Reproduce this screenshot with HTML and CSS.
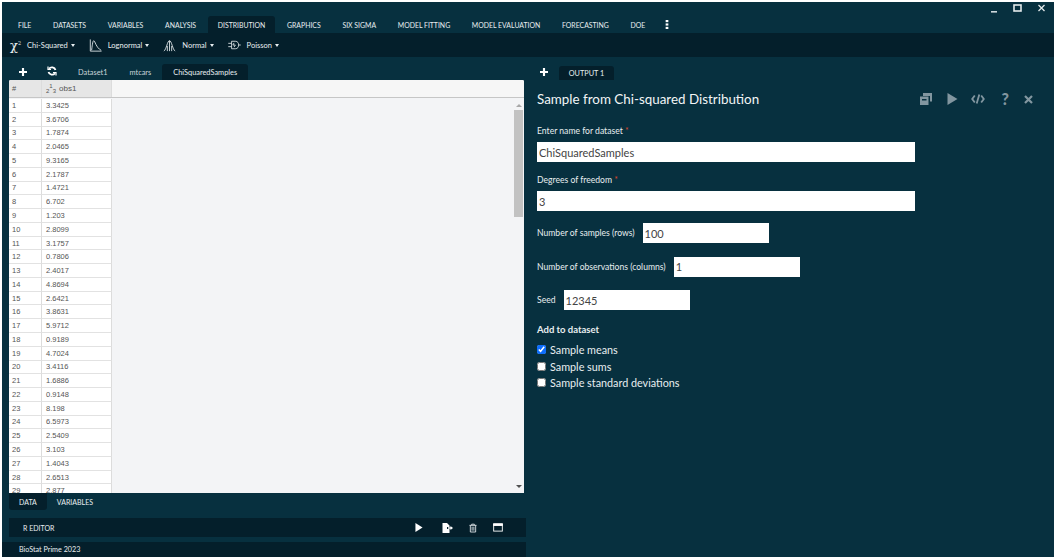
FILE: index.html
```html
<!DOCTYPE html>
<html lang="en">

<head>
    <meta charset="UTF-8">
    <title>BioStat Prime 2023</title>
    <link rel="stylesheet" href="styles.css">
</head>

<body>
    <div class="app">
        <div class="menu-bar">
            <div class="menu-item">FILE</div>
            <div class="menu-item">DATASETS</div>
            <div class="menu-item">VARIABLES</div>
            <div class="menu-item">ANALYSIS</div>
            <div class="menu-item active">DISTRIBUTION</div>
            <div class="menu-item">GRAPHICS</div>
            <div class="menu-item">SIX SIGMA</div>
            <div class="menu-item">MODEL FITTING</div>
            <div class="menu-item">MODEL EVALUATION</div>
            <div class="menu-item">FORECASTING</div>
            <div class="menu-item">DOE</div>
            <div class="menu-more">
                <svg width="4" height="9" viewBox="0 0 4 10" fill="#fff"><rect x="0.5" y="0" width="3" height="2.4"/><rect x="0.5" y="3.8" width="3" height="2.4"/><rect x="0.5" y="7.6" width="3" height="2.4"/></svg>
            </div>
            <div class="window-buttons">
                <svg width="9" height="9" viewBox="0 0 9 9" fill="#cfd8dc"><rect x="1" y="7" width="6" height="1.6"/></svg>
                <svg width="10" height="9" viewBox="0 0 10 9" fill="none" stroke="#e4eaec" stroke-width="1.6"><rect x="1" y="1" width="7" height="6"/></svg>
                <svg width="9" height="9" viewBox="0 0 9 9" stroke="#e4eaec" stroke-width="1.3"><path d="M1.5 1l6 6M7.5 1l-6 6"/></svg>
            </div>
        </div>

        <div class="tool-bar">
            <div class="tool">
                <span class="tool-chi">&chi;<sup>2</sup></span>
                <span>Chi-Squared</span><span class="caret"></span>
            </div>
            <div class="tool">
                <svg width="13" height="13" viewBox="0 0 15 15" fill="none" stroke="#e4eaec" stroke-width="1"><path d="M1.5 0.5v13.5h13"/><path d="M3 13C4 5 4.5 2 5.5 2c1.5 0 2.5 8 8.5 11"/></svg>
                <span>Lognormal</span><span class="caret"></span>
            </div>
            <div class="tool">
                <svg width="13" height="13" viewBox="0 0 15 15" fill="none" stroke="#e4eaec" stroke-width="1"><path d="M1 14C4 12 5 2 7.5 2S11 12 14 14"/><path d="M7.5 2v12M5 8v6M10 8v6"/></svg>
                <span>Normal</span><span class="caret"></span>
            </div>
            <div class="tool">
                <svg width="13" height="10" viewBox="0 0 15 12" fill="none" stroke="#e4eaec" stroke-width="1"><path d="M0 4h4M0 8h4M4 1.5h4.500c3 0 4 2.500 4 4.500s-1 4.500-4 4.500H4zM12.500 6H15"/><path d="M7 3.500l-1.500 2.500h3L7 8.500"/></svg>
                <span>Poisson</span><span class="caret"></span>
            </div>
        </div>

        <div class="main">
            <div class="left-pane">
                <div class="tab-row">
                    <svg class="tab-icon" width="8" height="8" viewBox="0 0 9 9" fill="#fff"><path d="M3.300 0h2.400v3.300H9v2.400H5.700V9H3.300V5.700H0V3.300h3.300z"/></svg>
                    <svg class="tab-icon refresh" width="10" height="10" viewBox="0 0 10 10" fill="none" stroke="#fff" stroke-width="1.800"><path d="M8.500 4A3.700 3.700 0 0 0 2 2.800M1.500 6A3.700 3.700 0 0 0 8 7.200"/><path d="M1 0.500v3h3M9 9.500v-3H6" stroke-width="1.200"/></svg>
                    <div class="tab">Dataset1</div>
                    <div class="tab">mtcars</div>
                    <div class="tab active">ChiSquaredSamples</div>
                </div>

                <div class="grid">
                    <div class="grid-head">
                        <div class="cell-num">#</div>
                        <div class="cell-val"><span class="frac"><sub>2</sub><sup>1</sup><sub>3</sub></span> obs1</div>
                        <div class="head-rest"></div>
                    </div>
                    <div class="grid-body">
                        <div class="grid-rows">
                            <div class="row"><div class="cell-num">1</div><div class="cell-val">3.3425</div></div>
                            <div class="row"><div class="cell-num">2</div><div class="cell-val">3.6706</div></div>
                            <div class="row"><div class="cell-num">3</div><div class="cell-val">1.7874</div></div>
                            <div class="row"><div class="cell-num">4</div><div class="cell-val">2.0465</div></div>
                            <div class="row"><div class="cell-num">5</div><div class="cell-val">9.3165</div></div>
                            <div class="row"><div class="cell-num">6</div><div class="cell-val">2.1787</div></div>
                            <div class="row"><div class="cell-num">7</div><div class="cell-val">1.4721</div></div>
                            <div class="row"><div class="cell-num">8</div><div class="cell-val">6.702</div></div>
                            <div class="row"><div class="cell-num">9</div><div class="cell-val">1.203</div></div>
                            <div class="row"><div class="cell-num">10</div><div class="cell-val">2.8099</div></div>
                            <div class="row"><div class="cell-num">11</div><div class="cell-val">3.1757</div></div>
                            <div class="row"><div class="cell-num">12</div><div class="cell-val">0.7806</div></div>
                            <div class="row"><div class="cell-num">13</div><div class="cell-val">2.4017</div></div>
                            <div class="row"><div class="cell-num">14</div><div class="cell-val">4.8694</div></div>
                            <div class="row"><div class="cell-num">15</div><div class="cell-val">2.6421</div></div>
                            <div class="row"><div class="cell-num">16</div><div class="cell-val">3.8631</div></div>
                            <div class="row"><div class="cell-num">17</div><div class="cell-val">5.9712</div></div>
                            <div class="row"><div class="cell-num">18</div><div class="cell-val">0.9189</div></div>
                            <div class="row"><div class="cell-num">19</div><div class="cell-val">4.7024</div></div>
                            <div class="row"><div class="cell-num">20</div><div class="cell-val">3.4116</div></div>
                            <div class="row"><div class="cell-num">21</div><div class="cell-val">1.6886</div></div>
                            <div class="row"><div class="cell-num">22</div><div class="cell-val">0.9148</div></div>
                            <div class="row"><div class="cell-num">23</div><div class="cell-val">8.198</div></div>
                            <div class="row"><div class="cell-num">24</div><div class="cell-val">6.5973</div></div>
                            <div class="row"><div class="cell-num">25</div><div class="cell-val">2.5409</div></div>
                            <div class="row"><div class="cell-num">26</div><div class="cell-val">3.103</div></div>
                            <div class="row"><div class="cell-num">27</div><div class="cell-val">1.4043</div></div>
                            <div class="row"><div class="cell-num">28</div><div class="cell-val">2.6513</div></div>
                            <div class="row"><div class="cell-num">29</div><div class="cell-val">2.877</div></div>
                        </div>
                        <div class="scroll">
                            <span class="arrow-up"></span>
                            <div class="scroll-track"><div class="scroll-thumb"></div></div>
                            <span class="arrow-down"></span>
                        </div>
                    </div>
                </div>

                <div class="bottom-tabs">
                    <div class="bottom-tab active">DATA</div>
                    <div class="bottom-tab">VARIABLES</div>
                </div>

                <div class="editor-bar">
                    <span class="editor-title">R EDITOR</span>
                    <div class="editor-icons">
                        <svg class="run-icon" width="8" height="9" viewBox="0 0 9 10" fill="#fff"><path d="M0.500 0l8 5-8 5z"/></svg>
                        <svg width="11" height="10" viewBox="0 0 11 10" fill="#fff"><path d="M0.500 0h4.500l2.500 2.500V4H5v2h2.500v4H0.500zM6 4.300h2.500V3l2.500 2-2.500 2V5.700H6z"/></svg>
                        <svg width="8" height="10" viewBox="0 0 9 10" fill="none" stroke="#dfe5e8"><path d="M0.500 2h8M3 2V0.700h3V2M1.500 2v7.500h6V2M3.500 3.500v4.500M5.500 3.500v4.500"/></svg>
                        <svg width="10" height="9" viewBox="0 0 11 10" fill="none" stroke="#fff"><rect x="0.700" y="1" width="9.600" height="8"/><rect x="0.700" y="1" width="9.600" height="1.800" fill="#fff"/></svg>
                    </div>
                </div>

                <div class="status-bar">BioStat Prime 2023</div>
            </div>

            <div class="right-pane">
                <div class="output-tabs">
                    <svg class="tab-icon" width="8" height="8" viewBox="0 0 9 9" fill="#fff"><path d="M3.300 0h2.400v3.300H9v2.400H5.700V9H3.300V5.700H0V3.300h3.300z"/></svg>
                    <div class="output-tab">OUTPUT 1</div>
                </div>

                <div class="dialog-head">
                    <h1>Sample from Chi-squared Distribution</h1>
                    <div class="dialog-icons">
                        <svg width="12" height="12" viewBox="0 0 12 12" fill="#8296a0"><path d="M3 0h9v8.500h-2V3H3z"/><path d="M0 3.500h8.500V12H0zM2 6v1.500h4.500V6z" fill-rule="evenodd"/></svg>
                        <svg width="11" height="12" viewBox="0 0 11 12" fill="#8296a0"><path d="M0.500 0l10 6-10 6z"/></svg>
                        <svg class="code-icon" width="14" height="10" viewBox="0 0 14 10" fill="none" stroke="#8296a0" stroke-width="1.800"><path d="M3.800 1.500L1.200 5l2.600 3.500M10.200 1.500L12.800 5l-2.600 3.500M8.300 0.500L5.700 9.500"/></svg>
                        <span class="help">?</span>
                        <svg width="9" height="9" viewBox="0 0 9 9" stroke="#8296a0" stroke-width="2.200"><path d="M1 1l7 7M8 1l-7 7"/></svg>
                    </div>
                </div>

                <form class="dialog-form">
                    <div class="field">
                        <label>Enter name for dataset <span class="req">*</span></label>
                        <input class="wide" type="text" value="ChiSquaredSamples">
                    </div>
                    <div class="field">
                        <label>Degrees of freedom <span class="req">*</span></label>
                        <input class="wide" type="text" value="3">
                    </div>
                    <div class="field-inline">
                        <label>Number of samples (rows)</label>
                        <input class="short" type="text" value="100">
                    </div>
                    <div class="field-inline">
                        <label>Number of observations (columns)</label>
                        <input class="short" type="text" value="1">
                    </div>
                    <div class="field-inline">
                        <label>Seed</label>
                        <input class="short" type="text" value="12345">
                    </div>
                    <div class="section-title">Add to dataset</div>
                    <label class="check"><input type="checkbox" checked> Sample means</label>
                    <label class="check"><input type="checkbox"> Sample sums</label>
                    <label class="check"><input type="checkbox"> Sample standard deviations</label>
                </form>
            </div>
        </div>
    </div>
</body>

</html>
```
FILE: styles.css
```css
html,
body {
    margin: 0;
    height: 100%;
    overflow: hidden;
    background-color: #fff;
}

body {
    padding: 2px 1px 0 2px;
    box-sizing: border-box;
    font-family: Lato, "Open Sans", sans-serif;
    color: #e8eef0;
}

.app {
    height: 555px;
    display: flex;
    flex-direction: column;
    background-color: #07303f;
}

.menu-bar {
    height: 31px;
    display: flex;
    align-items: flex-end;
    padding-left: 6px;
    font-size: 6.900px;
    position: relative;
}

.menu-item {
    height: 17px;
    padding: 0 10px;
    margin-right: 1.700px;
    display: flex;
    align-items: center;
    border-radius: 3px 3px 0 0;
    white-space: nowrap;
}

.menu-item.active {
    background-color: #041f2b;
}

.menu-more {
    height: 17px;
    margin-left: 8px;
    display: flex;
    align-items: center;
}

.window-buttons {
    position: absolute;
    top: 2px;
    right: 8px;
    display: flex;
    gap: 14px;
}

.tool-bar {
    height: 24px;
    background-color: #041f2b;
    display: flex;
    align-items: center;
    padding-left: 8px;
    gap: 14px;
    font-size: 7.500px;
}

.tool {
    display: flex;
    align-items: center;
    gap: 6px;
}

.tool-chi {
    font-size: 13px;
    font-family: "DejaVu Serif", serif;
    line-height: 1;
}

.tool-chi sup {
    font-size: 5px;
}

.caret {
    width: 0;
    height: 0;
    margin-left: -3px;
    border-left: 2.500px solid transparent;
    border-right: 2.500px solid transparent;
    border-top: 3px solid #e8eef0;
}

.main {
    flex: 1;
    display: flex;
    min-height: 0;
}

.left-pane {
    width: 524px;
    display: flex;
    flex-direction: column;
}

.tab-row {
    height: 23px;
    display: flex;
    align-items: flex-end;
    padding-left: 17px;
    font-size: 7.400px;
}

.tab-icon {
    margin-bottom: 4px;
}

.refresh {
    margin-left: 20px;
    margin-right: 10px;
}

.tab {
    height: 16px;
    padding: 0 11px;
    display: flex;
    align-items: center;
    border-radius: 3px 3px 0 0;
    color: #c9d4d9;
}

.tab.active {
    background-color: #041f2b;
    color: #e8eef0;
}

.grid {
    height: 413px;
    margin: 0 2px 0 7px;
    background-color: #f3f4f6;
    border-radius: 2px 2px 0 0;
    overflow: hidden;
    font-family: "Liberation Sans", Arial, sans-serif;
    font-size: 7.500px;
    color: #555;
    display: flex;
    flex-direction: column;
}

.grid-head {
    height: 17px;
    display: flex;
    flex-shrink: 0;
    background-color: #ececec;
    border-bottom: 1px solid #c6c6c6;
}

.grid-head .cell-num,
.grid-head .cell-val {
    background-color: #e6e6e6;
    border-bottom: none;
}

.grid-head .cell-val {
    gap: 3px;
    font-size: 8px;
}

.head-rest {
    flex: 1;
    background-color: #f6f6f6;
}

.frac {
    font-size: 7px;
}

.frac sup,
.frac sub {
    font-size: 6px;
    line-height: 0;
}

.grid-body {
    flex: 1;
    display: flex;
    min-height: 0;
}

.grid-rows {
    flex: 1;
    min-height: 0;
    overflow: hidden;
    padding-top: 1px;
}

.row {
    display: flex;
    height: 13.780px;
}

.cell-num,
.cell-val {
    display: flex;
    align-items: center;
    gap: 2px;
    box-sizing: border-box;
    padding-left: 3px;
    background-color: #fff;
    border-bottom: 1px solid #e2e2e2;
    border-right: 1px solid #dcdcdc;
}

.cell-num {
    width: 33px;
}

.cell-val {
    width: 70px;
    padding-left: 4px;
}

.scroll {
    width: 11px;
    display: flex;
    flex-direction: column;
    align-items: center;
    background-color: #f3f4f6;
}

.scroll-track {
    flex: 1;
    width: 100%;
    margin: 3px 0 4px;
}

.scroll-thumb {
    width: 9px;
    height: 107px;
    margin-left: 1px;
    background-color: #c2c2c2;
}

.arrow-up,
.arrow-down {
    width: 0;
    height: 0;
    border-left: 3px solid transparent;
    border-right: 3px solid transparent;
}

.arrow-up {
    margin-top: 6px;
    border-bottom: 3px solid #a8a8a8;
}

.arrow-down {
    margin-bottom: 5px;
    border-top: 3px solid #505050;
}

.bottom-tabs {
    height: 17px;
    display: flex;
    padding-left: 7px;
    font-size: 7px;
}

.bottom-tab {
    height: 17px;
    padding: 0 10px;
    display: flex;
    align-items: center;
    border-radius: 0 0 3px 3px;
}

.bottom-tab.active {
    background-color: #041f2b;
}

.editor-bar {
    height: 19px;
    margin: 8px 0 0 7px;
    padding: 0 23px 0 14px;
    background-color: #041f2b;
    display: flex;
    align-items: center;
    justify-content: space-between;
    font-size: 7px;
}

.editor-icons {
    display: flex;
    gap: 16px;
    align-items: center;
}

.run-icon {
    margin-right: 3px;
}

.status-bar {
    flex: 1;
    margin-top: 5px;
    padding-left: 17px;
    background-color: #041f2b;
    display: flex;
    align-items: center;
    font-size: 7.200px;
}

.right-pane {
    flex: 1;
    padding-left: 11px;
    min-width: 0;
}

.output-tabs {
    height: 23px;
    display: flex;
    align-items: flex-end;
    padding-left: 3px;
    gap: 11px;
}

.output-tab {
    height: 14px;
    width: 55px;
    display: flex;
    align-items: center;
    justify-content: center;
    background-color: #041f2b;
    border-radius: 3px 3px 0 0;
    font-size: 7.300px;
}

.dialog-head {
    height: 38px;
    display: flex;
    align-items: center;
    justify-content: space-between;
    padding-right: 21px;
}

h1 {
    margin: -1px 0 0;
    font-size: 13.400px;
    font-weight: 400;
    color: #f2f5f6;
}

.dialog-icons {
    display: flex;
    align-items: center;
    gap: 15px;
}

.code-icon {
    margin: 0 2px 0 -2px;
}

.help {
    font-size: 16px;
    font-weight: 900;
    line-height: 1;
    color: #8296a0;
}

.dialog-form {
    padding-top: 7px;
    font-size: 8.600px;
}

.field {
    margin-bottom: 12px;
}

.field label {
    display: block;
    height: 17px;
    line-height: 12px;
}

.req {
    color: #d9472b;
}

input[type="text"] {
    box-sizing: border-box;
    height: 20px;
    padding: 0 2px;
    border: none;
    background-color: #fff;
    color: #444;
    font-family: Lato, "Open Sans", sans-serif;
    font-size: 11px;
}

.wide {
    display: block;
    width: 378px;
}

.short {
    width: 126px;
}

.field-inline {
    display: flex;
    align-items: center;
    gap: 8px;
    height: 20px;
    margin-bottom: 13.500px;
}

.section-title {
    font-weight: 700;
    font-size: 9.500px;
    line-height: 12px;
    margin-bottom: 6px;
}

.check {
    display: flex;
    align-items: center;
    gap: 4px;
    height: 16.500px;
    font-size: 10.800px;
}

.check input {
    width: 9px;
    height: 9px;
    margin: 0;
    accent-color: #0d6efd;
}
```
